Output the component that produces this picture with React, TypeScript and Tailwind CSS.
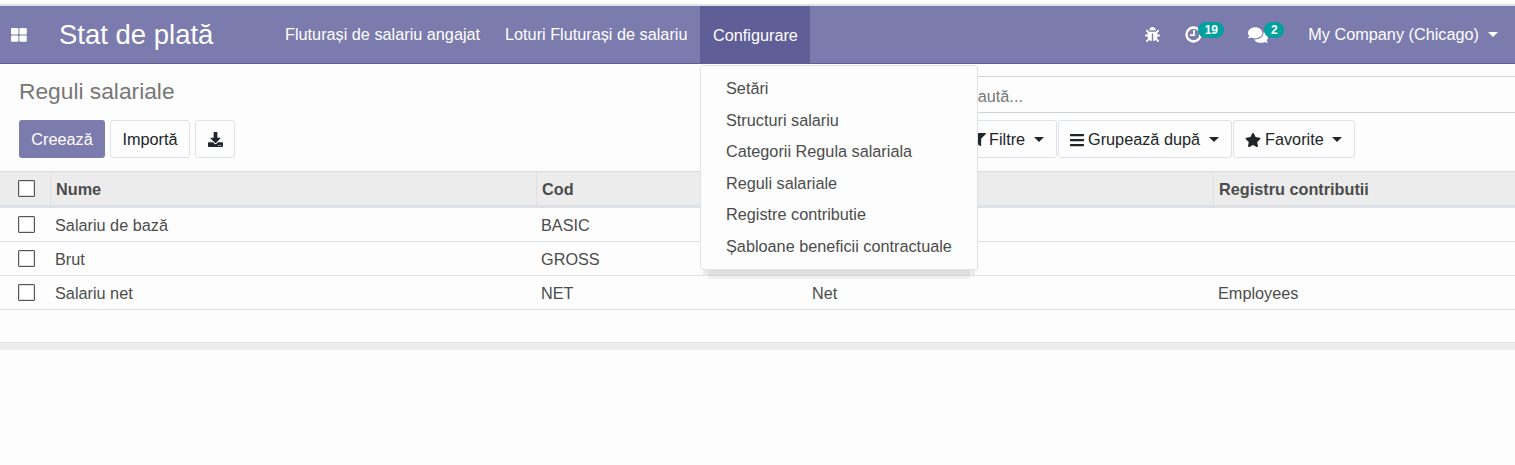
import React from "react";
import { FaDownload, FaFilter, FaBars, FaStar, FaBug, FaComments } from "react-icons/fa";

const Caret = () => (
  <span className="inline-block w-0 h-0 border-x-[5px] border-x-transparent border-t-[5px] border-t-current" />
);

const ThLarge = () => (
  <svg width="16" height="14" viewBox="0 0 16 14" fill="white">
    <rect x="0" y="0" width="7.4" height="6.4" rx="1" />
    <rect x="8.4" y="0" width="7.4" height="6.4" rx="1" />
    <rect x="0" y="7.4" width="7.4" height="6.4" rx="1" />
    <rect x="8.4" y="7.4" width="7.4" height="6.4" rx="1" />
  </svg>
);

const Clock = () => (
  <svg width="17" height="17" viewBox="0 0 17 17" fill="none" stroke="white">
    <circle cx="8.5" cy="8.5" r="7" strokeWidth="2.4" />
    <path d="M9 4v5.2H5" strokeWidth="1.7" />
  </svg>
);

const Check = () => (
  <span className="block w-[17px] h-[17px] border border-[#555] rounded-[1px] bg-white shadow-[inset_0_0_0_1px_#ddd]" />
);

const cols = "grid grid-cols-[51px_486px_270px_407px_1fr]";

const rows = [
  ["Salariu de bază", "BASIC", "", ""],
  ["Brut", "GROSS", "", ""],
  ["Salariu net", "NET", "Net", "Employees"],
];

const menu = [
  "Setări",
  "Structuri salariu",
  "Categorii Regula salariala",
  "Reguli salariale",
  "Registre contributie",
  "Șabloane beneficii contractuale",
];

const FilterBtn = ({ icon, label, w, textGap, caretGap }: { icon: React.ReactNode; label: string; w: string; textGap: string; caretGap: string }) => (
  <button className={`h-[38px] ${w} pl-[11px] pt-[1px] flex items-center border border-[#dee2e6] rounded-[3px] text-[#212529]`}>
    {icon}
    <span className={textGap}>{label}</span>
    <span className={`${caretGap} flex`}><Caret /></span>
  </button>
);

export default function App() {
  return (
    <div className="relative h-[465px] w-full overflow-hidden bg-[#fdfdfd] font-['Liberation_Sans',Arial,sans-serif] text-[16.25px] text-[#4c4c4c]">
      <div className="h-1 bg-white" />
      <div className="h-[2px] bg-[#dee2e6]" />
      <nav className="h-[58px] bg-[#7c7bad] border-b border-[#5f5e97] flex items-stretch text-white">
        <div className="w-[59px] flex items-center pl-[11px]"><ThLarge /></div>
        <div className="w-[226px] flex items-center text-[27.5px] leading-none">Stat de plată</div>
        <div className="flex items-center w-[220px] whitespace-nowrap">Fluturași de salariu angajat</div>
        <div className="flex items-center w-[195px] whitespace-nowrap">Loturi Fluturași de salariu</div>
        <div className="flex items-center w-[110px] pl-[13px] bg-[#5f5e97] whitespace-nowrap mb-[-1px]">Configurare</div>
        <div className="ml-auto flex items-center">
          <FaBug className="w-[15px] h-[15px] text-white mr-[25px]" />
          <div className="relative w-[17px] h-[17px] mr-[46px]">
            <Clock />
            <span className="absolute left-[13px] top-[-4px] h-4 w-[26px] rounded-full bg-[#00a09d] text-[12px] font-bold leading-4 text-center">19</span>
          </div>
          <div className="relative w-[20px] h-[18px] mr-[40px]">
            <FaComments className="w-[20px] h-[18px] text-white" />
            <span className="absolute left-[16px] top-[-4px] h-4 w-5 rounded-full bg-[#00a09d] text-[12px] font-bold leading-4 text-center">2</span>
          </div>
          <span className="whitespace-nowrap">My Company (Chicago)</span>
          <span className="ml-[9px] mr-[17px] flex"><Caret /></span>
        </div>
      </nav>

      <section className="grid grid-cols-[961px_1fr] h-[107px]">
        <div className="pl-[19px] pt-[12px]">
          <h1 className="text-[22.75px] leading-[30px] text-[#777]">Reguli salariale</h1>
          <div className="flex gap-[5px] mt-[14px]">
            <button className="h-[38px] w-[86px] pt-[1px] bg-[#7c7bad] text-white rounded-[3px]">Creează</button>
            <button className="h-[38px] w-[80px] pt-[1px] border border-[#dee2e6] rounded-[3px] text-[#212529]">Importă</button>
            <button className="h-[38px] w-[40px] border border-[#dee2e6] rounded-[3px] flex items-center justify-center">
              <FaDownload className="w-[15px] h-[15px] text-[#212529]" />
            </button>
          </div>
        </div>
        <div className="pt-[12px]">
          <div className="h-[37px] pt-[4px] border-y border-[#ced4da] flex items-center pl-[5px] text-[#777] leading-none">Caută...</div>
          <div className="flex gap-[1px] mt-[7px]">
            <FilterBtn icon={<FaFilter className="w-[13px] h-[13px]" />} label="Filtre" w="w-[96px]" textGap="ml-[3px]" caretGap="ml-[9px]" />
            <FilterBtn icon={<FaBars className="w-[14px] h-4" />} label="Grupează după" w="w-[174px]" textGap="ml-[4px]" caretGap="ml-[9px]" />
            <FilterBtn icon={<FaStar className="w-4 h-4" />} label="Favorite" w="w-[122px]" textGap="ml-[4px]" caretGap="ml-[8px]" />
          </div>
        </div>
      </section>

      <div className={`${cols} h-[37px] bg-[#ececec] border-t border-[#d8dadd] border-b-[3px] border-b-[#dee2e6] font-bold text-[#4c4c4c]`}>
        <div className="flex items-center pl-[18px] border-r border-[#dee2e6]"><Check /></div>
        <div className="flex items-center pl-[5px] pt-[1px] border-r border-[#dee2e6]">Nume</div>
        <div className="flex items-center pl-[5px] pt-[1px] border-r border-[#dee2e6]">Cod</div>
        <div className="flex items-center pl-[5px] border-r border-[#dee2e6]" />
        <div className="flex items-center pl-[5px] pt-[1px]">Registru contributii</div>
      </div>
      {rows.map((r) => (
        <div key={r[0]} className={`${cols} h-[34px] border-b border-[#dee2e6]`}>
          <div className="flex items-center pl-[18px]"><Check /></div>
          <div className="flex items-center pl-[4px] pt-[2px]">{r[0]}</div>
          <div className="flex items-center pl-[4px] pt-[2px]">{r[1]}</div>
          <div className="flex items-center pl-[5px] pt-[2px]">{r[2]}</div>
          <div className="flex items-center pl-[4px] pt-[2px]">{r[3]}</div>
        </div>
      ))}
      <div className="h-[32px]" />
      <div className="h-[8px] bg-[#ececec] border-t border-[#dee2e6]" />

      <div className="absolute left-[700px] top-[65px] w-[278px] h-[205px] pt-[6.4px] bg-[#fdfdfd] border border-[#dee2e6] rounded-[3px] shadow-[0_8px_0_-3px_rgba(0,0,0,0.07),0_17px_0_-8px_rgba(0,0,0,0.05)]">
        {menu.map((m) => (
          <div key={m} className="h-[31.6px] pl-[25px] flex items-center whitespace-nowrap text-[#4c4c4c]">{m}</div>
        ))}
      </div>
    </div>
  );
}
